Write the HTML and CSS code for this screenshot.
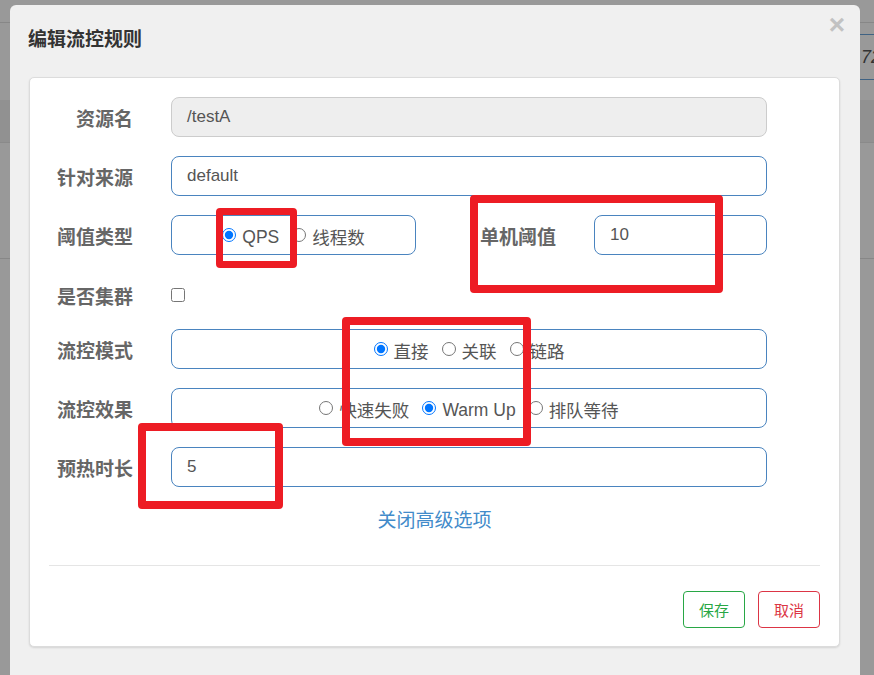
FILE: index.html
```html
<!DOCTYPE html>
<html lang="zh">
<head>
<meta charset="utf-8">
<title>编辑流控规则</title>
<link rel="stylesheet" href="styles.css">
</head>
<body>
<div class="page">
  <div class="bg">
    <div class="bg-top"></div>
    <div class="bg-line"></div>
    <div class="bg-sp1"></div>
    <div class="bg-field">72</div>
    <div class="bg-sp2"></div>
    <div class="bg-band"></div>
    <div class="bg-sp3"></div>
    <div class="bg-line"></div>
  </div>

  <div class="modal">
    <div class="modal-header">
      <h4 class="modal-title">编辑流控规则</h4>
      <span class="close">×</span>
    </div>
    <div class="card">
      <div class="form">
        <div class="row">
          <div class="lbl">资源名</div>
          <div class="field disabled">/testA</div>
        </div>
        <div class="row">
          <div class="lbl">针对来源</div>
          <div class="field">default</div>
        </div>
        <div class="row">
          <div class="lbl">阈值类型</div>
          <div class="field opts narrow">
            <label class="opt"><input type="radio" name="t" checked><span class="en">QPS</span></label>
            <label class="opt"><input type="radio" name="t"><span>线程数</span></label>
          </div>
          <div class="lbl lbl2">单机阈值</div>
          <div class="field small">10</div>
        </div>
        <div class="row row-check">
          <div class="lbl">是否集群</div>
          <input class="chk" type="checkbox">
        </div>
        <div class="row">
          <div class="lbl">流控模式</div>
          <div class="field opts">
            <label class="opt"><input type="radio" name="m" checked><span>直接</span></label>
            <label class="opt"><input type="radio" name="m"><span>关联</span></label>
            <label class="opt"><input type="radio" name="m"><span>链路</span></label>
          </div>
        </div>
        <div class="row">
          <div class="lbl">流控效果</div>
          <div class="field opts">
            <label class="opt"><input type="radio" name="e"><span>快速失败</span></label>
            <label class="opt"><input type="radio" name="e" checked><span class="en">Warm Up</span></label>
            <label class="opt"><input type="radio" name="e"><span>排队等待</span></label>
          </div>
        </div>
        <div class="row last">
          <div class="lbl">预热时长</div>
          <div class="field">5</div>
        </div>
      </div>
      <div class="adv"><a class="adv-link">关闭高级选项</a></div>
      <div class="divider"></div>
      <div class="footer">
        <button class="btn btn-save">保存</button>
        <button class="btn btn-cancel">取消</button>
      </div>
    </div>
  </div>

  <div class="mark mark1"></div>
  <div class="mark mark2"></div>
  <div class="mark mark3"></div>
  <div class="mark mark4"></div>
</div>
</body>
</html>
```

FILE: styles.css
```css
* { box-sizing: border-box; }
html, body { margin: 0; padding: 0; }
body {
  width: 874px;
  height: 675px;
  overflow: hidden;
  background: #999999;
  font-family: "Liberation Sans", "Noto Sans CJK SC", sans-serif;
}
.page {
  position: relative;
  width: 874px;
  height: 675px;
  overflow: hidden;
}

/* dimmed page behind the dialog */
.bg { width: 874px; }
.bg-top { height: 22px; }
.bg-line { height: 1px; background: #878787; }
.bg-sp1 { height: 11px; }
.bg-field {
  height: 46px;
  margin-left: 820px;
  padding-left: 41px;
  border-top: 1px solid #3f6283;
  border-bottom: 1px solid #3f6283;
  line-height: 44px;
  font-size: 18px;
  font-style: italic;
  color: #333;
  white-space: nowrap;
  overflow: hidden;
}
.bg-sp2 { height: 20px; }
.bg-band {
  height: 43px;
  background: #919191;
  border-bottom: 1px solid #8a8a8a;
}
.bg-sp3 { height: 115px; }

/* dialog */
.modal {
  position: absolute;
  left: 10px;
  top: 5px;
  width: 850px;
  height: 720px;
  background: #f0f0f0;
  border-radius: 6px;
}
.modal-header {
  position: relative;
  padding: 20px 18px 0;
}
.modal-title {
  margin: 0;
  font-family: "Noto Sans CJK SC", sans-serif;
  font-size: 19px;
  font-weight: 700;
  line-height: 26px;
  color: #333;
}
.close {
  position: absolute;
  top: 2px;
  right: 15px;
  font-family: "Liberation Sans", sans-serif;
  font-size: 28px;
  font-weight: 700;
  line-height: 36px;
  color: #c2c2c2;
}

.card {
  margin: 26px 20px 0 19px;
  padding: 19px 19px 18px;
  background: #fff;
  border: 1px solid #dcdcdc;
  border-radius: 5px;
  box-shadow: 0 1px 2px rgba(0, 0, 0, 0.12);
}

.form { display: flex; flex-direction: column; }
.row {
  display: flex;
  align-items: center;
  height: 40px;
  margin-bottom: 19px;
}
.row.last { margin-bottom: 0; }
.row.row-check { height: 41px; margin-bottom: 14px; }

.lbl {
  width: 84px;
  margin-right: 38px;
  text-align: right;
  font-family: "Noto Sans CJK SC", sans-serif;
  font-size: 19px;
  font-weight: 700;
  line-height: 26px;
  color: #666;
  white-space: nowrap;
  position: relative;
  top: 1px;
}
.lbl2 {
  width: 77px;
  margin-left: 64px;
  margin-right: 37px;
  text-align: left;
}

.field {
  width: 596px;
  height: 40px;
  padding: 0 15px;
  border: 1px solid #4a84bf;
  border-radius: 8px;
  display: flex;
  align-items: center;
  font-size: 17px;
  color: #555;
  background: #fff;
}
.field.disabled {
  background: #eeeeee;
  border-color: #cccccc;
}
.field.narrow { width: 245px; }
.field.small { width: 173px; }

.field.opts {
  justify-content: center;
  gap: 13px;
  padding: 0;
}
.opt {
  display: flex;
  align-items: center;
  gap: 6px;
  font-family: "Noto Sans CJK SC", sans-serif;
  font-size: 17.5px;
  line-height: 24px;
  color: #555;
  white-space: nowrap;
}
.opt span { position: relative; top: 2px; }
.opt .en { font-family: "Liberation Sans", sans-serif; }
.opt input {
  margin: 0;
  width: 14px;
  height: 14px;
  accent-color: #0075ff;
}
.chk {
  margin: 0;
  width: 14px;
  height: 14px;
}

.adv {
  margin-top: 18px;
  height: 27px;
  text-align: center;
  font-family: "Noto Sans CJK SC", sans-serif;
  font-size: 19px;
  line-height: 27px;
}
.adv-link {
  color: #428bca;
}

.divider {
  margin-top: 33px;
  height: 1px;
  background: #e5e5e5;
}

.footer {
  margin-top: 25px;
  display: flex;
  justify-content: flex-end;
  gap: 13px;
}
.btn {
  width: 62px;
  height: 37px;
  padding: 0;
  background: #fff;
  border: 1px solid;
  border-radius: 4px;
  font-family: "Noto Sans CJK SC", sans-serif;
  font-size: 15px;
}
.btn-save { color: #28a745; border-color: #28a745; }
.btn-cancel { color: #dc3545; border-color: #dc3545; }

/* red annotation boxes drawn over the screenshot */
.mark {
  position: absolute;
  border: 8px solid #ed1c24;
  border-radius: 4px;
}
.mark1 { left: 216px; top: 208px; width: 81px; height: 60px; border-width: 7px; }
.mark2 { left: 470px; top: 195px; width: 253px; height: 98px; }
.mark3 { left: 342px; top: 317px; width: 189px; height: 129px; }
.mark4 { left: 138px; top: 423px; width: 145px; height: 86px; }
```
